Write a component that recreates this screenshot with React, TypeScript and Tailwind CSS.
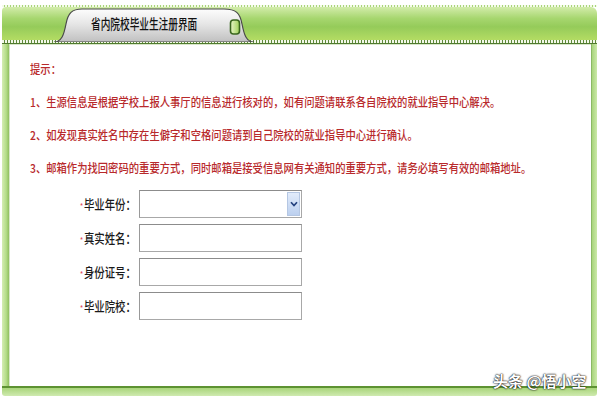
export default function App() {
  const tips = [
    "1、生源信息是根据学校上报人事厅的信息进行核对的，如有问题请联系各自院校的就业指导中心解决。",
    "2、如发现真实姓名中存在生僻字和空格问题请到自己院校的就业指导中心进行确认。",
    "3、邮箱作为找回密码的重要方式，同时邮箱是接受信息网有关通知的重要方式，请务必填写有效的邮箱地址。",
  ];
  const fields = ["毕业年份", "真实姓名", "身份证号", "毕业院校"];

  return (
    <div className="relative w-[600px] h-[400px] bg-white overflow-hidden font-['Noto_Sans_CJK_SC','Noto_Sans',sans-serif]">
      <div className="pt-[5px] pl-[2px] pr-[3px]">
        {/* header bar */}
        <div className="relative h-[39px] flex flex-col">
          <div className="h-[2px] bg-[repeating-linear-gradient(90deg,#f4fbe8_0_2px,#a8d47a_2px_3px)]" />
          <div className="flex-1 rounded-tr-[6px] rounded-tl-[4px] bg-[linear-gradient(to_bottom,#d3ecab,#a6d66e_35%,#95cb5a_60%,#b3dc63)]" />
          <div className="h-[4px] bg-[repeating-linear-gradient(90deg,#f2f8e8_0_2px,#5f8a3a_2px_3px)] border-b border-[#4f7a2e]" />

          {/* tab */}
          <div className="absolute left-[52px] top-[3px] w-[200px] h-[34px]">
            <svg width="200" height="34" viewBox="0 0 200 34" className="absolute inset-0">
              <defs>
                <linearGradient id="tabg" x1="0" y1="0" x2="0" y2="1">
                  <stop offset="0" stopColor="#fdfdfd" />
                  <stop offset="0.45" stopColor="#e6e6e6" />
                  <stop offset="1" stopColor="#c0c0c0" />
                </linearGradient>
                <linearGradient id="btng" x1="0" y1="0" x2="1" y2="0">
                  <stop offset="0" stopColor="#e9f6c8" />
                  <stop offset="1" stopColor="#9fd05a" />
                </linearGradient>
              </defs>
              <path
                d="M0 34 C8 34 10 26 12 16 C14 5 18 1 28 1 L170 1 C182 1 186 5 188 16 C190 26 192 34 200 34 Z"
                fill="url(#tabg)"
                stroke="#4a4a4a"
                strokeWidth="1.2"
              />
              <rect x="176.5" y="12" width="9" height="14" rx="3" fill="url(#btng)" stroke="#3a661f" strokeWidth="1.6" />
            </svg>
            <div className="absolute left-[37px] top-[6px] text-[14px] leading-[18px] font-medium text-[#111] scale-x-[0.69] origin-left whitespace-nowrap">
              省内院校毕业生注册界面
            </div>
          </div>
        </div>

        {/* content box */}
        <div className="flex h-[342px]">
          <div className="w-[7px] shrink-0 bg-[linear-gradient(to_right,#d5edb3,#b4dc88_60%,#8fbf5e)]" />
          <div className="flex-1 min-w-0 overflow-hidden bg-white pl-[21px] pt-[8px] shadow-[inset_1px_1px_0_#d8e6c8]">
            <div className="text-[12px] leading-[33px] font-medium text-[#b8292b] scale-x-[0.86] origin-left whitespace-nowrap">
              <div>提示：</div>
              {tips.map((t) => (
                <div key={t}>{t}</div>
              ))}
            </div>

            <div className="mt-[6px] flex flex-col gap-[6px]">
              {fields.map((f, i) => (
                <div key={f} className="flex items-center">
                  <div className="w-[109px] pr-[3px] flex justify-end">
                    <span className="text-[13px] font-medium text-[#1a1a1a] scale-x-[0.8] origin-right whitespace-nowrap">
                      <span className="text-[8px] text-[#e04a5a] align-middle mr-[1px]">*</span>
                      {f}：
                    </span>
                  </div>
                  <div className="relative w-[163px] h-[28px] border border-[#a8a8a8] border-t-[#8c8c8c] border-l-[#999] bg-white">
                    {i === 0 && (
                      <div className="absolute right-[1px] top-[1px] bottom-[1px] w-[13px] flex items-center justify-center bg-[linear-gradient(to_bottom,#e2ecfb,#bcd0ef)] border border-[#b5c7e3]">
                        <svg width="8" height="6" viewBox="0 0 8 6">
                          <path d="M1 1.2 L4 4.5 L7 1.2" fill="none" stroke="#24427e" strokeWidth="1.7" />
                        </svg>
                      </div>
                    )}
                  </div>
                </div>
              ))}
            </div>
          </div>
          <div className="w-[6px] shrink-0 border-l border-[#8bb964] bg-[linear-gradient(to_right,#a8d47c,#cbe9a8)]" />
        </div>

        {/* bottom border */}
        <div className="h-[2px] bg-[#5d9232]" />
        <div className="h-[8px] rounded-b-[3px] bg-[linear-gradient(to_bottom,#a9d57a,#cfeab0)]" />
      </div>

      <div className="absolute left-[493px] top-[371px] text-[15px] leading-[20px] font-bold text-white [text-shadow:0_0_2px_#000,0_0_1px_#000]">
        头条 @悟小空
      </div>
    </div>
  );
}
